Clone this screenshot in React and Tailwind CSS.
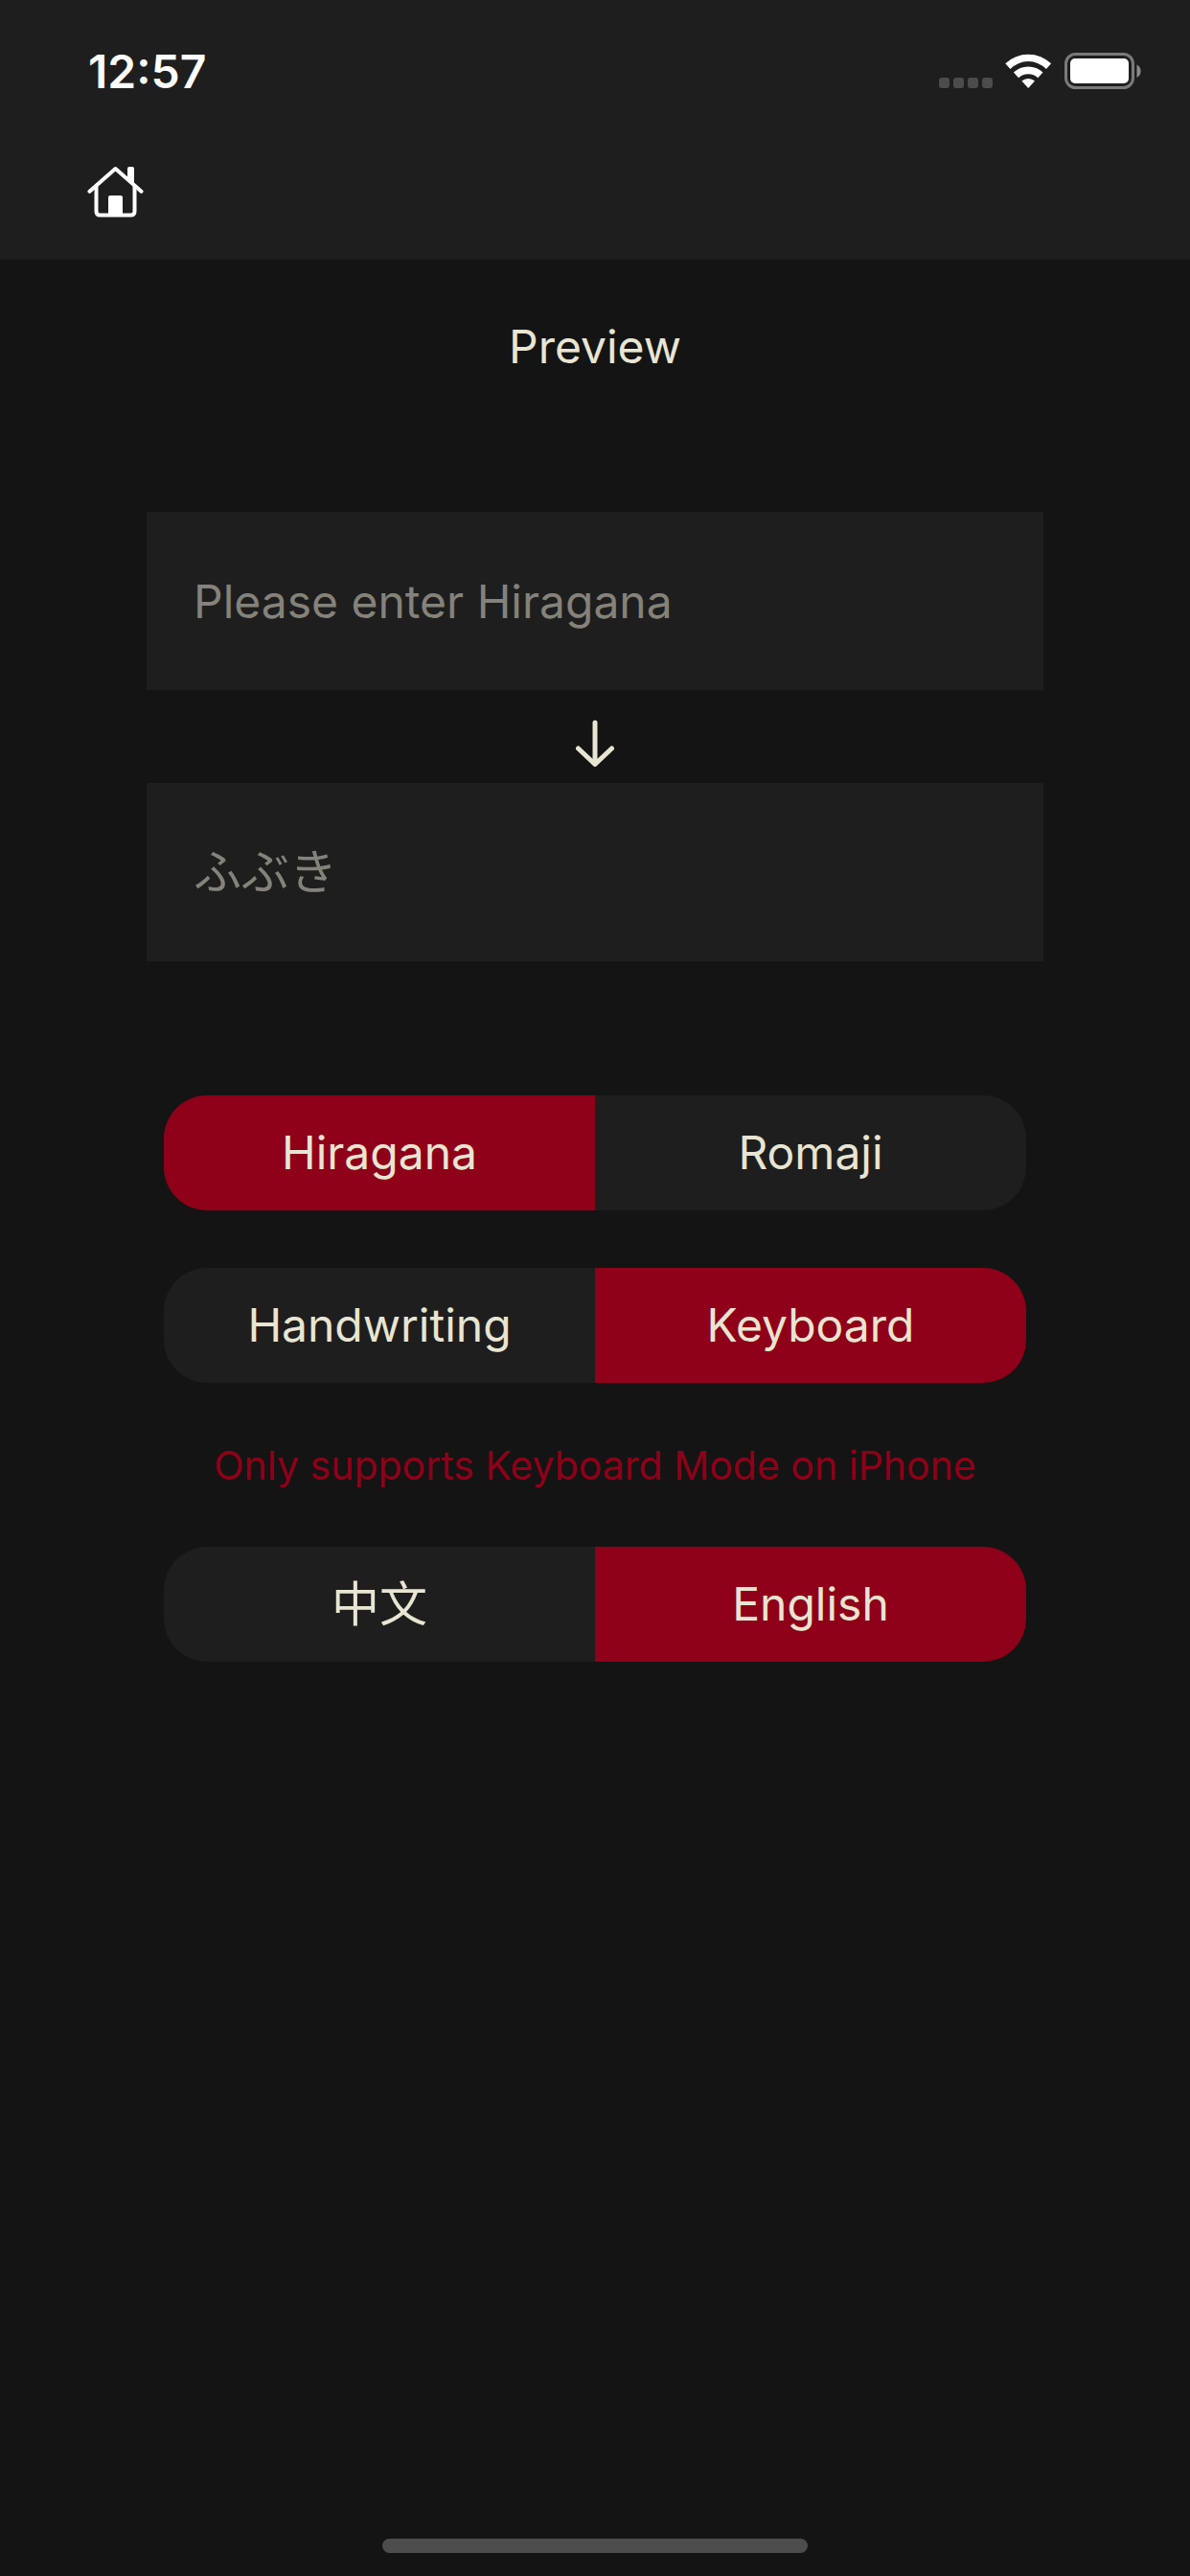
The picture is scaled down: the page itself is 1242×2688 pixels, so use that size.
import { useState } from "react";

function StatusBar() {
  return (
    <div className="flex items-center justify-between pl-[92px] pr-[49px] pt-[46px]">
      <time className="text-[48px] leading-[58px] font-semibold text-white">12:57</time>
      <svg width="214" height="44" viewBox="0 0 214 44" role="img" aria-label="No signal, Wi-Fi, battery full">
        <g fill="#4c4c4c">
          <rect x="1" y="28" width="11" height="11" rx="3" />
          <rect x="16" y="28" width="11" height="11" rx="3" />
          <rect x="31" y="28" width="11" height="11" rx="3" />
          <rect x="46" y="28" width="11" height="11" rx="3" />
        </g>
        <g fill="#fff">
          <path d="M70.3 13.3 A34.500 34.500 0 0 1 118.100 13.300 L113 19 A26.300 26.300 0 0 0 75.400 19 Z" />
          <path d="M78.900 22.600 A22 22 0 0 1 109.500 22.600 L104.300 28.200 A14.600 14.600 0 0 0 84.100 28.200 Z" />
          <path d="M87.400 31.600 A10 10 0 0 1 101 31.600 L94.200 39 Z" />
        </g>
        <rect x="133.500" y="3.500" width="70" height="35" rx="10" fill="none" stroke="#7a7a7a" strokeWidth="3" />
        <rect x="138" y="8" width="61" height="26" rx="5" fill="#fff" />
        <path d="M207.500 14.500 C213 17 213 25.500 207.500 28 Z" fill="#8a8a8a" />
      </svg>
    </div>
  );
}

function HomeIcon() {
  return (
    <svg width="60" height="56" viewBox="0 0 60 56" fill="none" aria-hidden="true">
      <path d="M2.500 26.800 L29.500 3 L56.500 26.800" stroke="#fff" strokeWidth="4" strokeLinecap="round" strokeLinejoin="round" />
      <path d="M9.500 21 V47.500 Q9.500 51.500 13.500 51.500 H45.500 Q49.500 51.500 49.500 47.500 V21" stroke="#fff" strokeWidth="4" />
      <path d="M42 13.500 V3 Q42 1 44 1 H47 Q49 1 49 3 V20.500 Z" fill="#fff" />
      <path d="M22 52 V33 Q22 31 24 31 H35 Q37 31 37 33 V52 Z" fill="#fff" />
    </svg>
  );
}

function ArrowDown() {
  return (
    <svg width="42" height="50" viewBox="0 0 42 50" fill="none" stroke="#e8e5d2" strokeWidth="5" strokeLinecap="round" strokeLinejoin="round" aria-hidden="true">
      <path d="M21 3 V46" />
      <path d="M3.500 30 L21 46.500 L38.500 30" />
    </svg>
  );
}

function Segmented({ label, options, initial }) {
  const [selected, setSelected] = useState(initial);
  return (
    <div role="group" aria-label={label} className="grid h-[120px] grid-cols-2 overflow-hidden rounded-[45px]">
      {options.map(({ text, lang }) => (
        <button
          key={text}
          type="button"
          lang={lang}
          aria-pressed={selected === text}
          onClick={() => setSelected(text)}
          className={`${selected === text ? "bg-[#8f0019]" : "bg-[#1e1e1e]"} ${lang === "zh" ? "text-[50px]" : ""}`}
        >
          {text}
        </button>
      ))}
    </div>
  );
}

const field =
  "block h-[186px] w-full bg-[#1e1e1e] px-[49px] text-[#e8e5d2] placeholder:text-[#84827a] placeholder:opacity-100 outline-none";

export default function App() {
  return (
    <div className="flex min-h-screen flex-col bg-[#141414] font-['Inter','Noto_Sans_CJK_JP',sans-serif] text-[48px] leading-[60px] text-[#e8e5d2]">
      <header className="bg-[#1e1e1e] pb-[42px]">
        <StatusBar />
        <nav className="mt-[69px] pl-[91px]">
          <a href="#home" aria-label="Home" className="block w-[60px]">
            <HomeIcon />
          </a>
        </nav>
      </header>

      <main className="flex-1">
        <h1 className="mt-[61px] text-center">Preview</h1>

        <section className="mt-[142px] px-[153px]">
          <input aria-label="Hiragana input" placeholder="Please enter Hiragana" className={field} />
          <div className="flex h-[97px] items-center justify-center pt-[14px]">
            <ArrowDown />
          </div>
          <input aria-label="Result" lang="ja" placeholder="ふぶき" readOnly className={`${field} text-[50px]`} />
        </section>

        <section className="mt-[140px] px-[171px]">
          <Segmented
            label="Script"
            options={[{ text: "Hiragana", lang: "en" }, { text: "Romaji", lang: "en" }]}
            initial="Hiragana"
          />
          <div className="mt-[60px]">
            <Segmented
              label="Input mode"
              options={[{ text: "Handwriting", lang: "en" }, { text: "Keyboard", lang: "en" }]}
              initial="Keyboard"
            />
          </div>
          <p className="mt-[61px] text-center text-[41px] leading-[50px] text-[#8f0019]">
            Only supports Keyboard Mode on iPhone
          </p>
          <div className="mt-[60px]">
            <Segmented
              label="Language"
              options={[{ text: "中文", lang: "zh" }, { text: "English", lang: "en" }]}
              initial="English"
            />
          </div>
        </section>
      </main>

      <footer className="flex justify-center pb-[24px]">
        <div className="h-[15px] w-[444px] rounded-full bg-[#4d4d4d]" />
      </footer>
    </div>
  );
}
